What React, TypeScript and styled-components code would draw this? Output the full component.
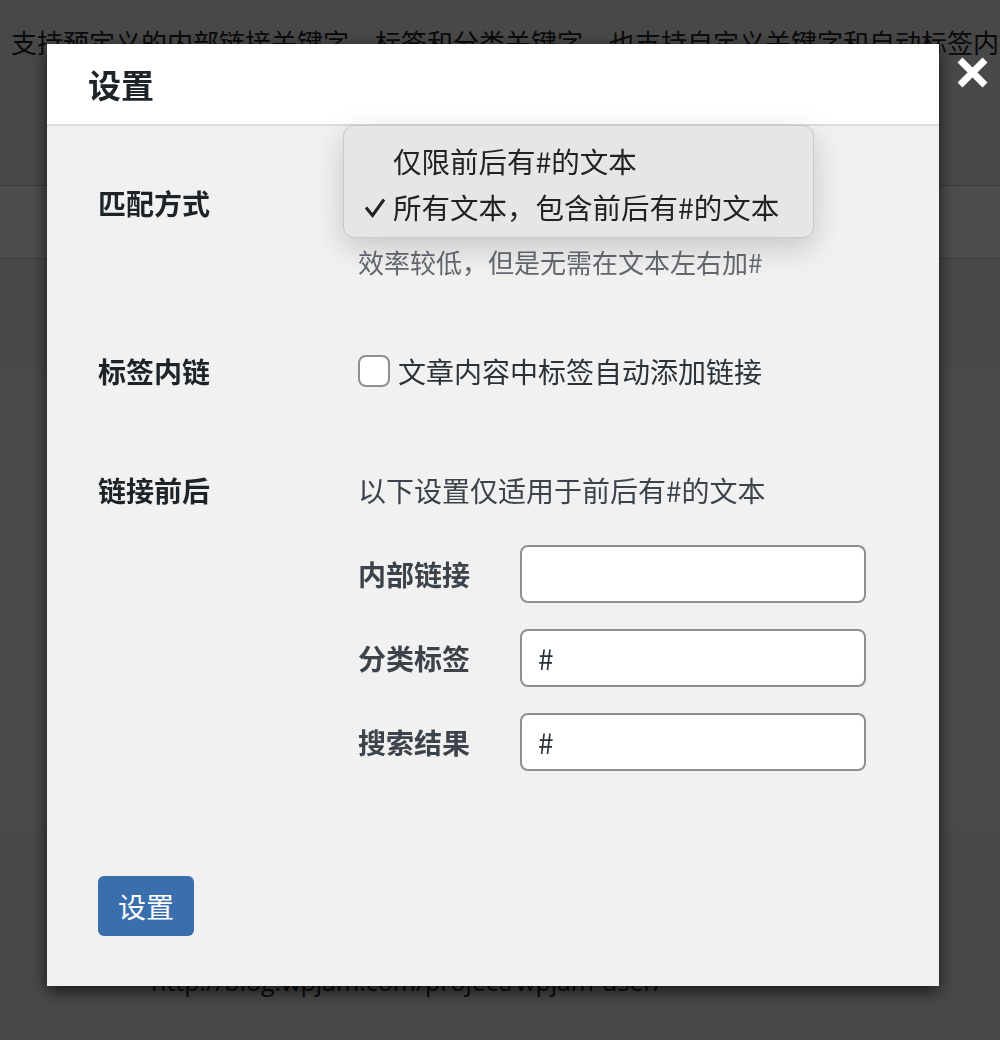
import React from 'react';
import styled, { createGlobalStyle } from 'styled-components';

const GlobalStyle = createGlobalStyle`
  html, body {
    margin: 0;
    padding: 0;
  }
  body {
    width: 1000px;
    height: 1040px;
    overflow: hidden;
    background: #f0f0f1;
    font-family: "Noto Sans CJK SC", "Noto Sans", sans-serif;
    color: #1d2327;
  }
`;

/* page behind the modal */
const Page = styled.div`
  height: 1040px;
  display: flex;
  flex-direction: column;
`;

const Intro = styled.p`
  margin: 22px 0 0;
  padding-left: 11px;
  font-size: 26px;
  line-height: 40px;
  white-space: nowrap;
  overflow: hidden;
`;

const TableHead = styled.div`
  margin-top: 123px;
  height: 72px;
  background: #fff;
  border-top: 1px solid #c3c4c7;
  border-bottom: 1px solid #c3c4c7;
`;

const TableBody = styled.div`
  margin-top: 110px;
  height: 460px;
  background: #f6f7f7;
`;

const PageLink = styled.div`
  margin-top: 137px;
  padding-left: 151px;
  font-size: 25px;
  line-height: 30px;
  font-family: "Open Sans", "Noto Sans", sans-serif;
`;

const Overlay = styled.div`
  position: fixed;
  inset: 0;
  background: rgba(0, 0, 0, 0.7);
`;

const Close = styled.button`
  position: fixed;
  left: 957px;
  top: 57px;
  width: 31px;
  height: 31px;
  padding: 0;
  border: 0;
  background: none;
  display: flex;
`;

/* modal */
const Modal = styled.div`
  position: fixed;
  left: 47px;
  top: 44px;
  width: 892px;
  background: #f1f1f1;
  box-shadow: 0 5px 15px rgba(0, 0, 0, 0.7);
`;

const Header = styled.div`
  height: 80px;
  display: flex;
  align-items: center;
  padding-left: 41px;
  background: #fff;
  border-bottom: 2px solid #dcdcde;
`;

const Title = styled.h1`
  margin: 0;
  font-size: 33px;
  font-weight: 600;
  color: #1d2327;
`;

const Body = styled.div`
  padding: 0 50px 50px 51px;
`;

const Row = styled.div<{ $top: number }>`
  display: grid;
  grid-template-columns: 260px 1fr;
  padding-top: ${(p) => p.$top}px;
`;

const Label = styled.div<{ $offset?: number }>`
  padding-top: ${(p) => p.$offset || 0}px;
  font-size: 28px;
  line-height: 40px;
  font-weight: 700;
  color: #1d2327;
`;

const Cell = styled.div`
  display: flex;
  flex-direction: column;
  align-items: flex-start;
`;

const SelectBox = styled.div`
  position: relative;
  width: 420px;
  height: 58px;
`;

const Menu = styled.ul`
  position: absolute;
  left: -15px;
  top: -51px;
  width: 471px;
  height: 113px;
  box-sizing: border-box;
  margin: 0;
  padding: 12px 0 0;
  list-style: none;
  background: #e6e6e5;
  border: 1px solid #c9c9c9;
  border-radius: 11px;
  box-shadow: 0 10px 30px rgba(0, 0, 0, 0.18);
`;

const MenuItem = styled.li`
  position: relative;
  height: 46px;
  padding-left: 49px;
  font-size: 28.5px;
  line-height: 46px;
  color: #222;
  white-space: nowrap;
`;

const Check = styled.svg`
  position: absolute;
  left: 20px;
  top: 13px;
`;

const Description = styled.p`
  margin: 8px 0 0;
  font-size: 26px;
  line-height: 40px;
  color: #646970;
`;

const CheckLabel = styled.label`
  display: flex;
  align-items: center;
  gap: 8px;
  font-size: 28px;
  line-height: 40px;
  color: #2c3338;
`;

const CheckBox = styled.span`
  width: 32px;
  height: 32px;
  box-sizing: border-box;
  border: 2px solid #8c8f94;
  border-radius: 8px;
  background: #fff;
`;

const Note = styled.p`
  margin: 0;
  font-size: 28px;
  line-height: 40px;
  color: #3c434a;
`;

const SubList = styled.div`
  margin-top: 35px;
  display: flex;
  flex-direction: column;
  gap: 26px;
`;

const SubRow = styled.div`
  display: grid;
  grid-template-columns: 162px 346px;
  align-items: center;
`;

const SubLabel = styled.span`
  font-size: 28px;
  font-weight: 700;
  color: #3c434a;
`;

const Input = styled.input`
  width: 346px;
  height: 58px;
  box-sizing: border-box;
  padding: 0 16px;
  border: 2px solid #8c8f94;
  border-radius: 8px;
  background: #fff;
  font-family: "Noto Sans CJK SC", "Noto Sans", sans-serif;
  font-size: 28px;
  color: #2c3338;
`;

const Submit = styled.button`
  margin-top: 105px;
  width: 96px;
  height: 60px;
  border: 0;
  border-radius: 6px;
  background: #3b6ead;
  color: #fff;
  font-family: "Noto Sans CJK SC", "Noto Sans", sans-serif;
  font-size: 28px;
`;

const linkFields = [
  { label: '内部链接', value: '' },
  { label: '分类标签', value: '#' },
  { label: '搜索结果', value: '#' },
];

export default function App() {
  return (
    <>
      <GlobalStyle />
      <Page>
        <Intro>支持预定义的内部链接关键字、标签和分类关键字，也支持自定义关键字和自动标签内链。</Intro>
        <TableHead />
        <TableBody />
        <PageLink>http://blog.wpjam.com/project/wpjam-user/</PageLink>
      </Page>
      <Overlay />
      <Close aria-label="关闭">
        <svg width="31" height="31" viewBox="0 0 31 31">
          <path d="M3 3L28 28M28 3L3 28" stroke="#fff" strokeWidth="7" />
        </svg>
      </Close>
      <Modal>
        <Header>
          <Title>设置</Title>
        </Header>
        <Body>
          <Row $top={50}>
            <Label $offset={7}>匹配方式</Label>
            <Cell>
              <SelectBox>
                <Menu>
                  <MenuItem>仅限前后有#的文本</MenuItem>
                  <MenuItem>
                    <Check width="22" height="22" viewBox="0 0 22 22">
                      <path d="M2 10.5L8.5 18.5L20 2.5" fill="none" stroke="#222" strokeWidth="3" />
                    </Check>
                    所有文本，包含前后有#的文本
                  </MenuItem>
                </Menu>
              </SelectBox>
              <Description>效率较低，但是无需在文本左右加#</Description>
            </Cell>
          </Row>
          <Row $top={69}>
            <Label>标签内链</Label>
            <Cell>
              <CheckLabel>
                <CheckBox />
                文章内容中标签自动添加链接
              </CheckLabel>
            </Cell>
          </Row>
          <Row $top={79}>
            <Label>链接前后</Label>
            <Cell>
              <Note>以下设置仅适用于前后有#的文本</Note>
              <SubList>
                {linkFields.map((f) => (
                  <SubRow key={f.label}>
                    <SubLabel>{f.label}</SubLabel>
                    <Input defaultValue={f.value} />
                  </SubRow>
                ))}
              </SubList>
            </Cell>
          </Row>
          <Submit>设置</Submit>
        </Body>
      </Modal>
    </>
  );
}
